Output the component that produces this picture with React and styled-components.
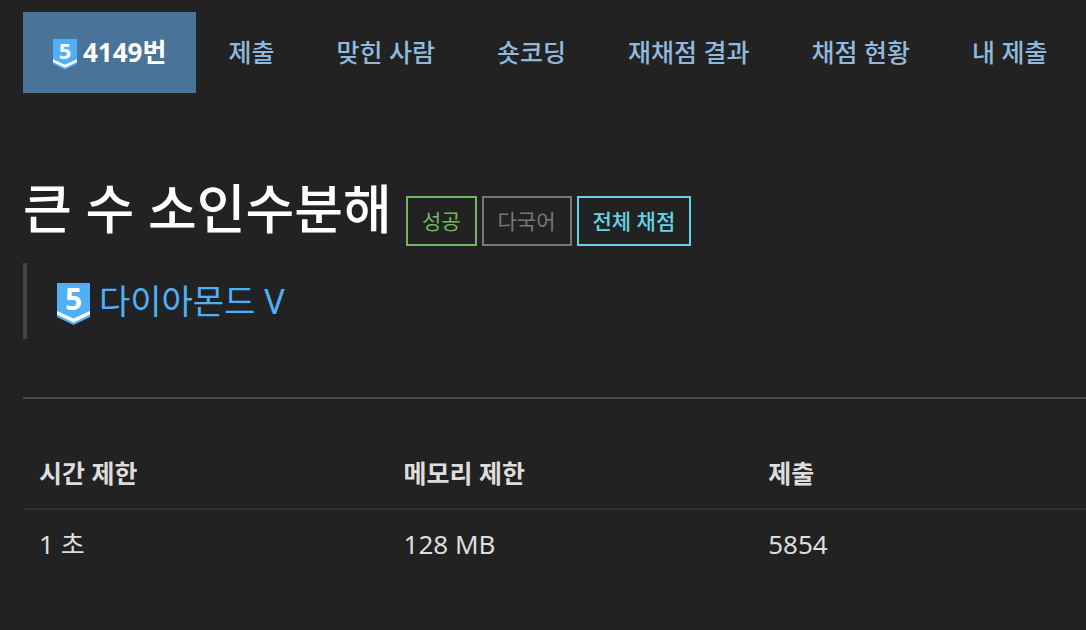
import React from "react";
import styled, { createGlobalStyle } from "styled-components";

const GlobalStyle = createGlobalStyle`
  *, *::before, *::after { box-sizing: border-box; }
  body {
    margin: 0;
    background: #222222;
    color: #dddddd;
    font-family: "Noto Sans", "Noto Sans CJK KR", sans-serif;
    font-size: 26px;
    line-height: 36px;
  }
`;

const Page = styled.main`
  padding: 12px 0 48px 23px;
`;

const Tabs = styled.nav`
  display: flex;
  gap: 2px;
  white-space: nowrap;
  overflow: hidden;
`;

const Tab = styled.a`
  display: flex;
  align-items: center;
  gap: 6px;
  height: 81px;
  padding: 0 30px 2px;
  flex-shrink: 0;
  font-size: ${(p) => (p.$active ? 26 : 25)}px;
  font-weight: ${(p) => (p.$active ? 700 : 500)};
  color: ${(p) => (p.$active ? "#ffffff" : "#8fb9de")};
  background: ${(p) => (p.$active ? "#4a7399" : "transparent")};
  text-decoration: none;
`;

const Heading = styled.header`
  display: flex;
  flex-wrap: wrap;
  align-items: flex-end;
  gap: 14px;
  margin-top: 78px;
`;

const Title = styled.h1`
  margin: 0;
  font-size: 53px;
  font-weight: 500;
  line-height: 75px;
  color: #ffffff;
`;

const Labels = styled.div`
  display: flex;
  gap: 5px;
`;

const Label = styled.span`
  height: 50px;
  padding: 0 14px;
  border: 2px solid ${(p) => p.$color};
  color: ${(p) => p.$color};
  font-size: 21px;
  font-weight: ${(p) => p.$weight || 400};
  line-height: 46px;
`;

const Tier = styled.blockquote`
  display: flex;
  align-items: center;
  height: 76px;
  margin: 17px 0 0;
  padding: 0 30px;
  border-left: 4px solid #444444;
`;

const TierLink = styled.a`
  display: flex;
  align-items: center;
  gap: 9px;
  color: #4fb0f8;
  font-size: 34px;
  line-height: 48px;
  text-decoration: none;
`;

const Divider = styled.hr`
  height: 2px;
  margin: 58px 0 40px;
  border: 0;
  background: #484848;
`;

const InfoTable = styled.table`
  width: 100%;
  table-layout: fixed;
  border-collapse: collapse;
  text-align: left;
`;

const HeadCell = styled.th`
  width: ${(p) => p.$width || "auto"};
  height: 70px;
  padding: 0 16px 2px;
  border-bottom: 2px solid #303030;
  font-size: 25px;
  font-weight: 700;
`;

const Cell = styled.td`
  height: 68px;
  padding: 0 16px;
`;

const Badge = styled.svg`
  display: block;
  flex-shrink: 0;
  width: ${(p) => p.$size}px;
  height: auto;
  margin-top: 6px;
  overflow: visible;
`;

function TierBadge({ size }) {
  return (
    <Badge $size={size} viewBox="0 0 33 42" aria-hidden="true">
      <path d="M0 0H33V34L16.500 42L0 34Z" fill="#4fb0f8" />
      <path d="M0 28L16.500 35.500L33 28V31.500L16.500 39.500L0 31.500Z" fill="#ffffff" />
      <text
        x="16.500"
        y="27"
        textAnchor="middle"
        fontFamily="Noto Sans, sans-serif"
        fontSize="30"
        fontWeight="700"
        fill="#ffffff"
      >
        5
      </text>
    </Badge>
  );
}

const links = ["제출", "맞힌 사람", "숏코딩", "재채점 결과", "채점 현황", "내 제출"];

export default function App() {
  return (
    <>
      <GlobalStyle />
      <Page>
        <Tabs>
          <Tab href="#problem" $active aria-current="page">
            <TierBadge size={24} />
            4149번
          </Tab>
          {links.map((name) => (
            <Tab href="#" key={name}>
              {name}
            </Tab>
          ))}
        </Tabs>
        <Heading>
          <Title>큰 수 소인수분해</Title>
          <Labels>
            <Label $color="#72b662">성공</Label>
            <Label $color="#777777">다국어</Label>
            <Label $color="#66d3e5" $weight={500}>
              전체 채점
            </Label>
          </Labels>
        </Heading>
        <Tier>
          <TierLink href="#tier">
            <TierBadge size={33} />
            다이아몬드 V
          </TierLink>
        </Tier>
        <Divider />
        <InfoTable>
          <thead>
            <tr>
              <HeadCell scope="col" $width="34.3%">시간 제한</HeadCell>
              <HeadCell scope="col" $width="34.3%">메모리 제한</HeadCell>
              <HeadCell scope="col">제출</HeadCell>
            </tr>
          </thead>
          <tbody>
            <tr>
              <Cell>1 초</Cell>
              <Cell>128 MB</Cell>
              <Cell>5854</Cell>
            </tr>
          </tbody>
        </InfoTable>
      </Page>
    </>
  );
}
